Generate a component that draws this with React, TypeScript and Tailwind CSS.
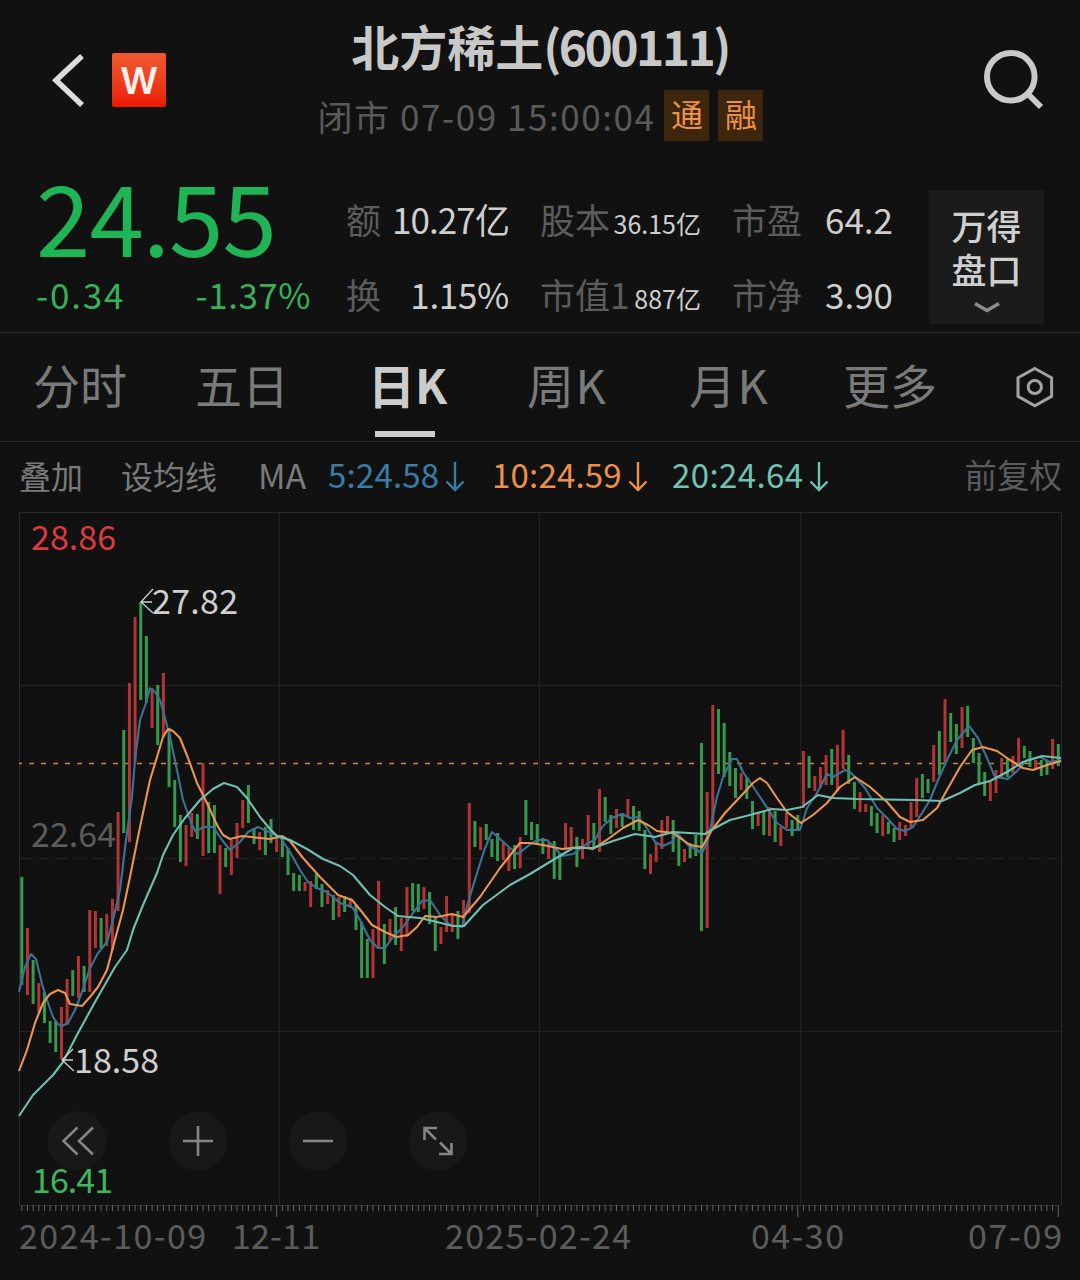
import React from 'react';

type Candle = [number, number, number];

// [direction, high y, low y], one entry per trading day
const CANDLES: Candle[] = [
  [0, 877, 985], [1, 928, 995], [0, 960, 1004], [1, 983, 1012], [0, 992, 1023], [0, 1021, 1043], [0, 1021, 1052], [1, 1007, 1059],
  [1, 979, 1025], [0, 970, 996], [1, 956, 998], [0, 966, 992], [1, 910, 992], [1, 911, 948], [0, 918, 948], [1, 914, 946],
  [1, 899, 950], [1, 812, 911], [0, 730, 833], [1, 683, 842], [1, 617, 762], [0, 602, 700], [0, 636, 703], [1, 688, 728],
  [0, 685, 745], [1, 673, 737], [0, 728, 787], [0, 780, 827], [0, 815, 862], [1, 825, 866], [1, 813, 837], [0, 814, 839],
  [1, 763, 856], [0, 802, 853], [0, 805, 853], [1, 845, 894], [0, 848, 867], [1, 840, 875], [1, 823, 858], [1, 800, 828],
  [0, 785, 823], [0, 828, 844], [1, 832, 850], [0, 827, 855], [0, 819, 843], [1, 838, 852], [0, 836, 857], [0, 848, 875],
  [0, 873, 891], [0, 875, 891], [1, 882, 891], [1, 881, 907], [0, 874, 889], [0, 884, 907], [1, 890, 904], [0, 895, 920],
  [1, 897, 917], [0, 896, 912], [1, 898, 908], [0, 905, 930], [0, 922, 978], [0, 939, 978], [1, 929, 978], [1, 881, 949],
  [0, 924, 964], [1, 919, 941], [0, 907, 945], [1, 918, 951], [1, 887, 937], [0, 883, 911], [0, 884, 912], [1, 887, 909],
  [0, 892, 924], [0, 918, 951], [1, 927, 944], [1, 896, 932], [1, 915, 932], [0, 911, 939], [1, 900, 927], [1, 803, 913],
  [0, 821, 847], [1, 827, 850], [0, 824, 840], [0, 839, 857], [0, 833, 861], [1, 843, 860], [1, 848, 871], [0, 845, 869],
  [1, 837, 868], [0, 800, 835], [0, 822, 840], [0, 824, 843], [0, 838, 854], [1, 843, 859], [0, 841, 879], [0, 853, 880],
  [1, 823, 850], [1, 827, 847], [0, 837, 867], [1, 839, 859], [1, 815, 847], [0, 823, 847], [1, 789, 852], [0, 797, 822],
  [0, 815, 834], [1, 809, 828], [0, 813, 827], [1, 799, 817], [0, 806, 830], [0, 811, 831], [0, 830, 869], [1, 854, 874],
  [1, 843, 862], [1, 820, 849], [1, 816, 834], [0, 820, 852], [0, 837, 866], [1, 849, 862], [0, 843, 858], [0, 835, 856],
  [0, 743, 931], [1, 792, 928], [1, 705, 828], [0, 709, 774], [0, 723, 777], [0, 752, 786], [0, 768, 798], [1, 773, 790],
  [0, 777, 799], [0, 801, 829], [1, 813, 826], [0, 812, 835], [1, 807, 836], [0, 811, 842], [1, 827, 846], [1, 813, 828],
  [0, 820, 836], [0, 815, 829], [1, 751, 808], [0, 756, 788], [1, 776, 791], [1, 767, 788], [1, 755, 785], [0, 749, 785],
  [1, 745, 791], [1, 730, 769], [0, 755, 784], [0, 782, 809], [1, 792, 812], [1, 804, 812], [0, 806, 826], [0, 813, 833],
  [1, 815, 836], [0, 822, 834], [0, 828, 842], [1, 822, 840], [1, 825, 836], [1, 802, 827], [1, 778, 817], [0, 774, 798],
  [0, 779, 793], [1, 745, 782], [0, 731, 775], [1, 699, 762], [0, 713, 742], [0, 724, 754], [1, 707, 748], [0, 706, 737],
  [0, 738, 763], [0, 753, 785], [0, 772, 796], [1, 782, 801], [1, 770, 793], [1, 758, 778], [0, 759, 777], [1, 756, 773],
  [1, 738, 763], [0, 746, 758], [0, 751, 767], [1, 760, 769], [0, 760, 776], [0, 760, 775], [1, 739, 769], [0, 744, 766],
];

const MA5 =
  '19,992 25,967 31,954 36,959 42,984 47,1000 53,1017 58,1024 62,1026 68,1023 75,1010 82,992 90,968 98,953 107,942 113,920 120,890 126,840 132,797 135,760 140,720 146,703 150,688 155,692 160,700 165,718 170,737 177,770 183,800 192,825 196,832 203,827 213,827 222,840 230,850 240,842 248,832 258,827 267,831 280,837 290,852 300,870 308,882 317,888 327,892 340,903 352,907 360,920 370,940 378,948 385,948 393,937 403,927 413,913 422,901 430,900 440,915 450,925 462,927 468,903 477,873 485,848 492,832 500,839 510,848 518,854 528,846 537,840 547,840 555,848 562,856 573,854 588,843 595,840 602,827 612,818 622,814 630,818 638,817 647,828 655,842 663,846 672,842 677,833 688,845 702,853 708,840 712,820 717,797 723,777 732,759 737,759 743,772 752,785 760,797 770,812 777,823 787,830 800,830 807,808 817,793 827,774 833,777 845,770 850,772 855,777 865,788 877,808 887,818 897,829 905,831 913,827 922,813 930,800 938,780 947,760 957,740 969,726 978,738 987,758 995,777 1008,779 1018,770 1027,760 1040,757 1050,762 1061,760';
const MA10 =
  '19,1071 27,1050 35,1023 43,1003 50,994 58,990 65,993 70,1004 82,1006 90,997 98,987 107,970 113,947 123,910 130,877 140,827 150,780 157,757 163,737 168,729 173,731 180,738 188,758 197,783 207,803 217,825 223,835 230,839 242,836 260,838 270,839 282,836 290,841 303,858 320,877 338,895 352,900 362,912 372,925 385,932 397,937 408,935 417,927 425,916 437,917 452,914 463,917 480,897 500,868 520,843 530,843 543,845 562,849 580,847 593,849 608,839 623,828 638,820 648,825 657,831 673,833 690,845 702,847 712,830 725,813 740,797 753,783 760,778 767,783 777,798 787,812 801,823 813,815 827,803 840,787 855,777 870,787 887,802 900,817 910,822 923,820 937,808 947,790 960,767 972,750 983,747 997,751 1010,760 1023,768 1033,770 1047,765 1061,761';
const MA20 =
  '19,1116 33,1095 53,1075 63,1062 78,1033 95,1002 115,967 127,950 133,930 143,905 157,873 163,855 173,835 185,818 200,800 213,789 224,783 237,787 247,798 260,817 270,829 277,836 290,840 307,849 323,859 340,866 353,875 370,895 385,907 398,916 420,918 437,922 453,926 464,926 483,905 510,885 530,874 553,860 573,848 593,848 613,841 635,834 655,837 673,832 705,834 713,829 730,820 750,815 772,809 787,810 802,807 818,795 833,798 857,799 915,800 942,801 960,793 975,785 990,781 1007,772 1023,762 1042,756 1061,758';

const candleX = (i: number) => 21.8 + i * 5.664;

const TABS = [
  { label: '分时', width: 'w-[162px]' },
  { label: '五日', width: 'w-[173px]' },
  { label: '日K', width: 'w-[159px]', active: true },
  { label: '周K', width: 'w-[162px] tracking-[1.6px]' },
  { label: '月K', width: 'w-[154px] tracking-[1.6px]' },
  { label: '更多', width: 'w-[95px]' },
];

const Header: React.FC = () => (
  <header className="flex h-[160px] items-center justify-between">
    <div className="flex w-[300px] items-center pl-[50px]">
      <svg width="38" height="60" viewBox="50 50 38 60" fill="none" stroke="#dcdcdc" strokeWidth="5.6">
        <path d="M82 56 56 80.3 82 105" />
      </svg>
      <div className="ml-6 flex size-[54px] items-center justify-center rounded-[2px] bg-linear-to-b from-[#f0582f] to-[#ea1500] font-[Inter] text-[37px] leading-none font-semibold text-[#fdf1ec]">
        W
      </div>
    </div>
    <div className="flex flex-col items-center self-start pt-[10px]">
      <h1 className="flex h-[80px] items-center pb-[10px] text-[48px] leading-none font-bold text-[#c8c8c8]">
        北方稀土<span className="tracking-[-2.6px]">(600111)</span>
      </h1>
      <div className="flex items-center pl-px">
        <span className="text-[35px] leading-[51px] tracking-[1.55px] text-[#5a5a5a]">闭市 07-09 15:00:04</span>
        <span className="ml-[9px] h-[51px] w-[45px] bg-[#3d260c] text-center text-[32px] leading-[47px] text-[#ee9146]">通</span>
        <span className="ml-[9px] h-[51px] w-[45px] bg-[#3d260c] text-center text-[32px] leading-[47px] text-[#ee9146]">融</span>
      </div>
    </div>
    <div className="flex w-[300px] justify-end pr-[34px]">
      <svg width="64" height="64" viewBox="982 48 64 64" fill="none" stroke="#cacaca" strokeWidth="6">
        <circle cx="1010.8" cy="76.7" r="23.8" />
        <path d="M1027.5 93.5 1041 107" />
      </svg>
    </div>
  </header>
);

interface StatProps {
  label: string;
  value: string;
  size?: string;
}

const Stat: React.FC<StatProps> = ({ label, value, size = 'text-[35px]' }) => (
  <div className="flex h-[75px] items-baseline justify-between leading-[75px] whitespace-nowrap">
    <span className="text-[35px] text-[#5c5c5c]">{label}</span>
    <span className={`${size} text-[#cfcfcf]`}>{value}</span>
  </div>
);

const Quote: React.FC = () => (
  <section className="flex h-[173px] border-b border-[#2a2a2a]">
    <div className="w-[346px] pl-[36px] text-[#1fb455]">
      <div className="h-[114px] text-[98px] leading-[109px] tracking-[-1px]">24.55</div>
      <div className="flex w-[275px] justify-between text-[35px] leading-[40px] text-[#36b15a]">
        <span className="tracking-[1.8px]">-0.34</span>
        <span className="tracking-[0.5px]">-1.37%</span>
      </div>
    </div>
    <div className="flex gap-[31px] pt-[21px]">
      <div className="w-[163px]">
        <Stat label="额" value="10.27亿" size="text-[35px] tracking-[-0.9px]" />
        <Stat label="换" value="1.15%" size="text-[35px] tracking-[-0.3px]" />
      </div>
      <div className="w-[161px]">
        <Stat label="股本" value="36.15亿" size="text-[25px]" />
        <Stat label="市值1" value="887亿" size="text-[25px]" />
      </div>
      <div className="w-[161px]">
        <Stat label="市盈" value="64.2" />
        <Stat label="市净" value="3.90" />
      </div>
    </div>
    <button className="mt-[30px] ml-[36px] flex h-[134px] w-[115px] flex-col items-center bg-[#1b1b1b] pt-[13px] text-[35px] leading-[44px] font-medium text-[#cfcfcf]">
      <span>万得</span>
      <span>盘口</span>
      <svg width="28" height="14" viewBox="0 0 28 14" fill="none" stroke="#8c8c8c" strokeWidth="3.6" className="mt-2.5">
        <path d="M2 2.5 14 9.5 26 2.5" />
      </svg>
    </button>
  </section>
);

const Tabs: React.FC = () => (
  <nav className="flex h-[109px] items-center border-b border-[#2a2a2a] pl-[33px]">
    {TABS.map((tab) => (
      <div
        key={tab.label}
        className={`relative flex h-full items-center pb-[7px] text-[47px] leading-none whitespace-nowrap ${tab.width} ${tab.active ? 'font-bold text-[#cccccc]' : 'text-[#7a7a7a]'}`}
      >
        {tab.label}
        {tab.active && <span className="absolute bottom-[4px] left-[7px] h-[6px] w-[60px] bg-[#cccccc]" />}
      </div>
    ))}
    <svg width="40" height="44" viewBox="1015 365 40 44" fill="none" stroke="#a3a3a3" strokeWidth="3" className="ml-auto mr-[25px]">
      <path d="M1034.8 368.5 1051.6 377.8V396.4L1034.8 405.8 1018 396.4V377.8Z" />
      <circle cx="1034.8" cy="387" r="6.6" />
    </svg>
  </nav>
);

const DownArrow: React.FC = () => (
  <svg width="20" height="32" viewBox="0 0 20 32" fill="none" stroke="currentColor" strokeWidth="2.4" className="mt-1">
    <path d="M10 1V29M1.5 20.5 10 29 18.5 20.5" />
  </svg>
);

const MaBar: React.FC = () => (
  <div className="flex h-[70px] items-center pb-[5px] pl-[19px] pr-[18px] text-[32px] leading-none whitespace-nowrap text-[#7a7a7a]">
    <span className="w-[102px]">叠加</span>
    <span className="w-[137px]">设均线</span>
    <span className="w-[70px] text-[34px]">MA</span>
    <span className="flex w-[164px] items-center gap-[6px] text-[33px] tracking-[0.2px] text-[#397da3]">5:24.58<DownArrow /></span>
    <span className="flex w-[180px] items-center gap-[6px] text-[33px] tracking-[0.2px] text-[#ec9149]">10:24.59<DownArrow /></span>
    <span className="flex items-center gap-[6px] text-[33px] tracking-[0.4px] text-[#6fc3b3]">20:24.64<DownArrow /></span>
    <span className="ml-auto text-[32.5px] text-[#5c5c5c]">前复权</span>
  </div>
);

const Chart: React.FC = () => (
  <svg width="1080" height="768" viewBox="0 512 1080 768" fill="none" fontSize="34">
    <g stroke="#232323">
      <path d="M19.5 512.5H1061.5V1205M19.5 512.5V1205" stroke="#2a2a2a" />
      <path d="M279.5 513V1205M539.5 513V1205M800.5 513V1205M20 685.5H1061M20 1031.5H1061" />
      <path d="M20 858.5H1061" strokeDasharray="12 6" />
    </g>
    <path d="M19 763.5H1061" stroke="#c8893f" strokeWidth="1.3" strokeDasharray="5 7" strokeDashoffset="2" />

    <text x="31" y="847" fill="#5c5c5c" textLength="85">22.64</text>

    {CANDLES.map(([up, high, low], i) => (
      <rect key={i} x={candleX(i) - 1.5} y={high} width="3" height={low - high} fill={up ? '#b23434' : '#36994e'} />
    ))}

    <g strokeWidth="2.1" strokeLinejoin="round">
      <polyline points={MA5} stroke="#397396" />
      <polyline points={MA10} stroke="#ea9552" />
      <polyline points={MA20} stroke="#70bfb0" />
    </g>

    <g stroke="#cfcfcf" strokeWidth="1.3">
      <path d="M153 589 141 602 153 613M141 602H152" />
      <path d="M73 1049 62 1060 74 1071M62 1060H73" />
    </g>
    <text x="152" y="614" fill="#cfcfcf" textLength="86">27.82</text>
    <text x="74" y="1073" fill="#cfcfcf" textLength="85">18.58</text>
    <text x="31" y="550" fill="#dd3a40" textLength="85">28.86</text>

    {[77, 198, 318, 438].map((cx) => (
      <circle key={cx} cx={cx} cy="1141" r="29.5" fill="#181818" />
    ))}
    <g stroke="#858585" strokeWidth="2.6">
      <path d="M77.5 1127.5 63.5 1141 77.5 1154.5M93 1127.5 79 1141 93 1154.5" />
      <path d="M183 1141H213M198 1126V1156" />
      <path d="M303 1141H333" />
      <path d="M437 1128H424.5V1140M424.5 1128 436 1139.5M451.5 1143V1154H439M451.5 1154 440 1142.5" />
    </g>
    <text x="32" y="1193" fill="#3cb55c" textLength="81">16.41</text>

    <path d="M19 1205.5H1059" stroke="#2c2c2c" />
    {CANDLES.map((_, i) => (
      <path key={i} d={`M${candleX(i)} 1205V${i > 0 && (i - 45) % 46 === 0 ? 1217 : 1211}`} stroke="#666" />
    ))}

    <g fill="#5c5c5c">
      <text x="19" y="1249" textLength="187">2024-10-09</text>
      <text x="232" y="1249" textLength="88">12-11</text>
      <text x="445" y="1249" textLength="186">2025-02-24</text>
      <text x="751" y="1249" textLength="93">04-30</text>
      <text x="968" y="1249" textLength="94">07-09</text>
    </g>
  </svg>
);

const App: React.FC = () => {
  return (
    <div className="h-[1280px] w-[1080px] overflow-hidden bg-[#111111] font-['Noto_Sans_CJK_SC',sans-serif]">
      <Header />
      <Quote />
      <Tabs />
      <MaBar />
      <Chart />
    </div>
  );
};

export default App;
